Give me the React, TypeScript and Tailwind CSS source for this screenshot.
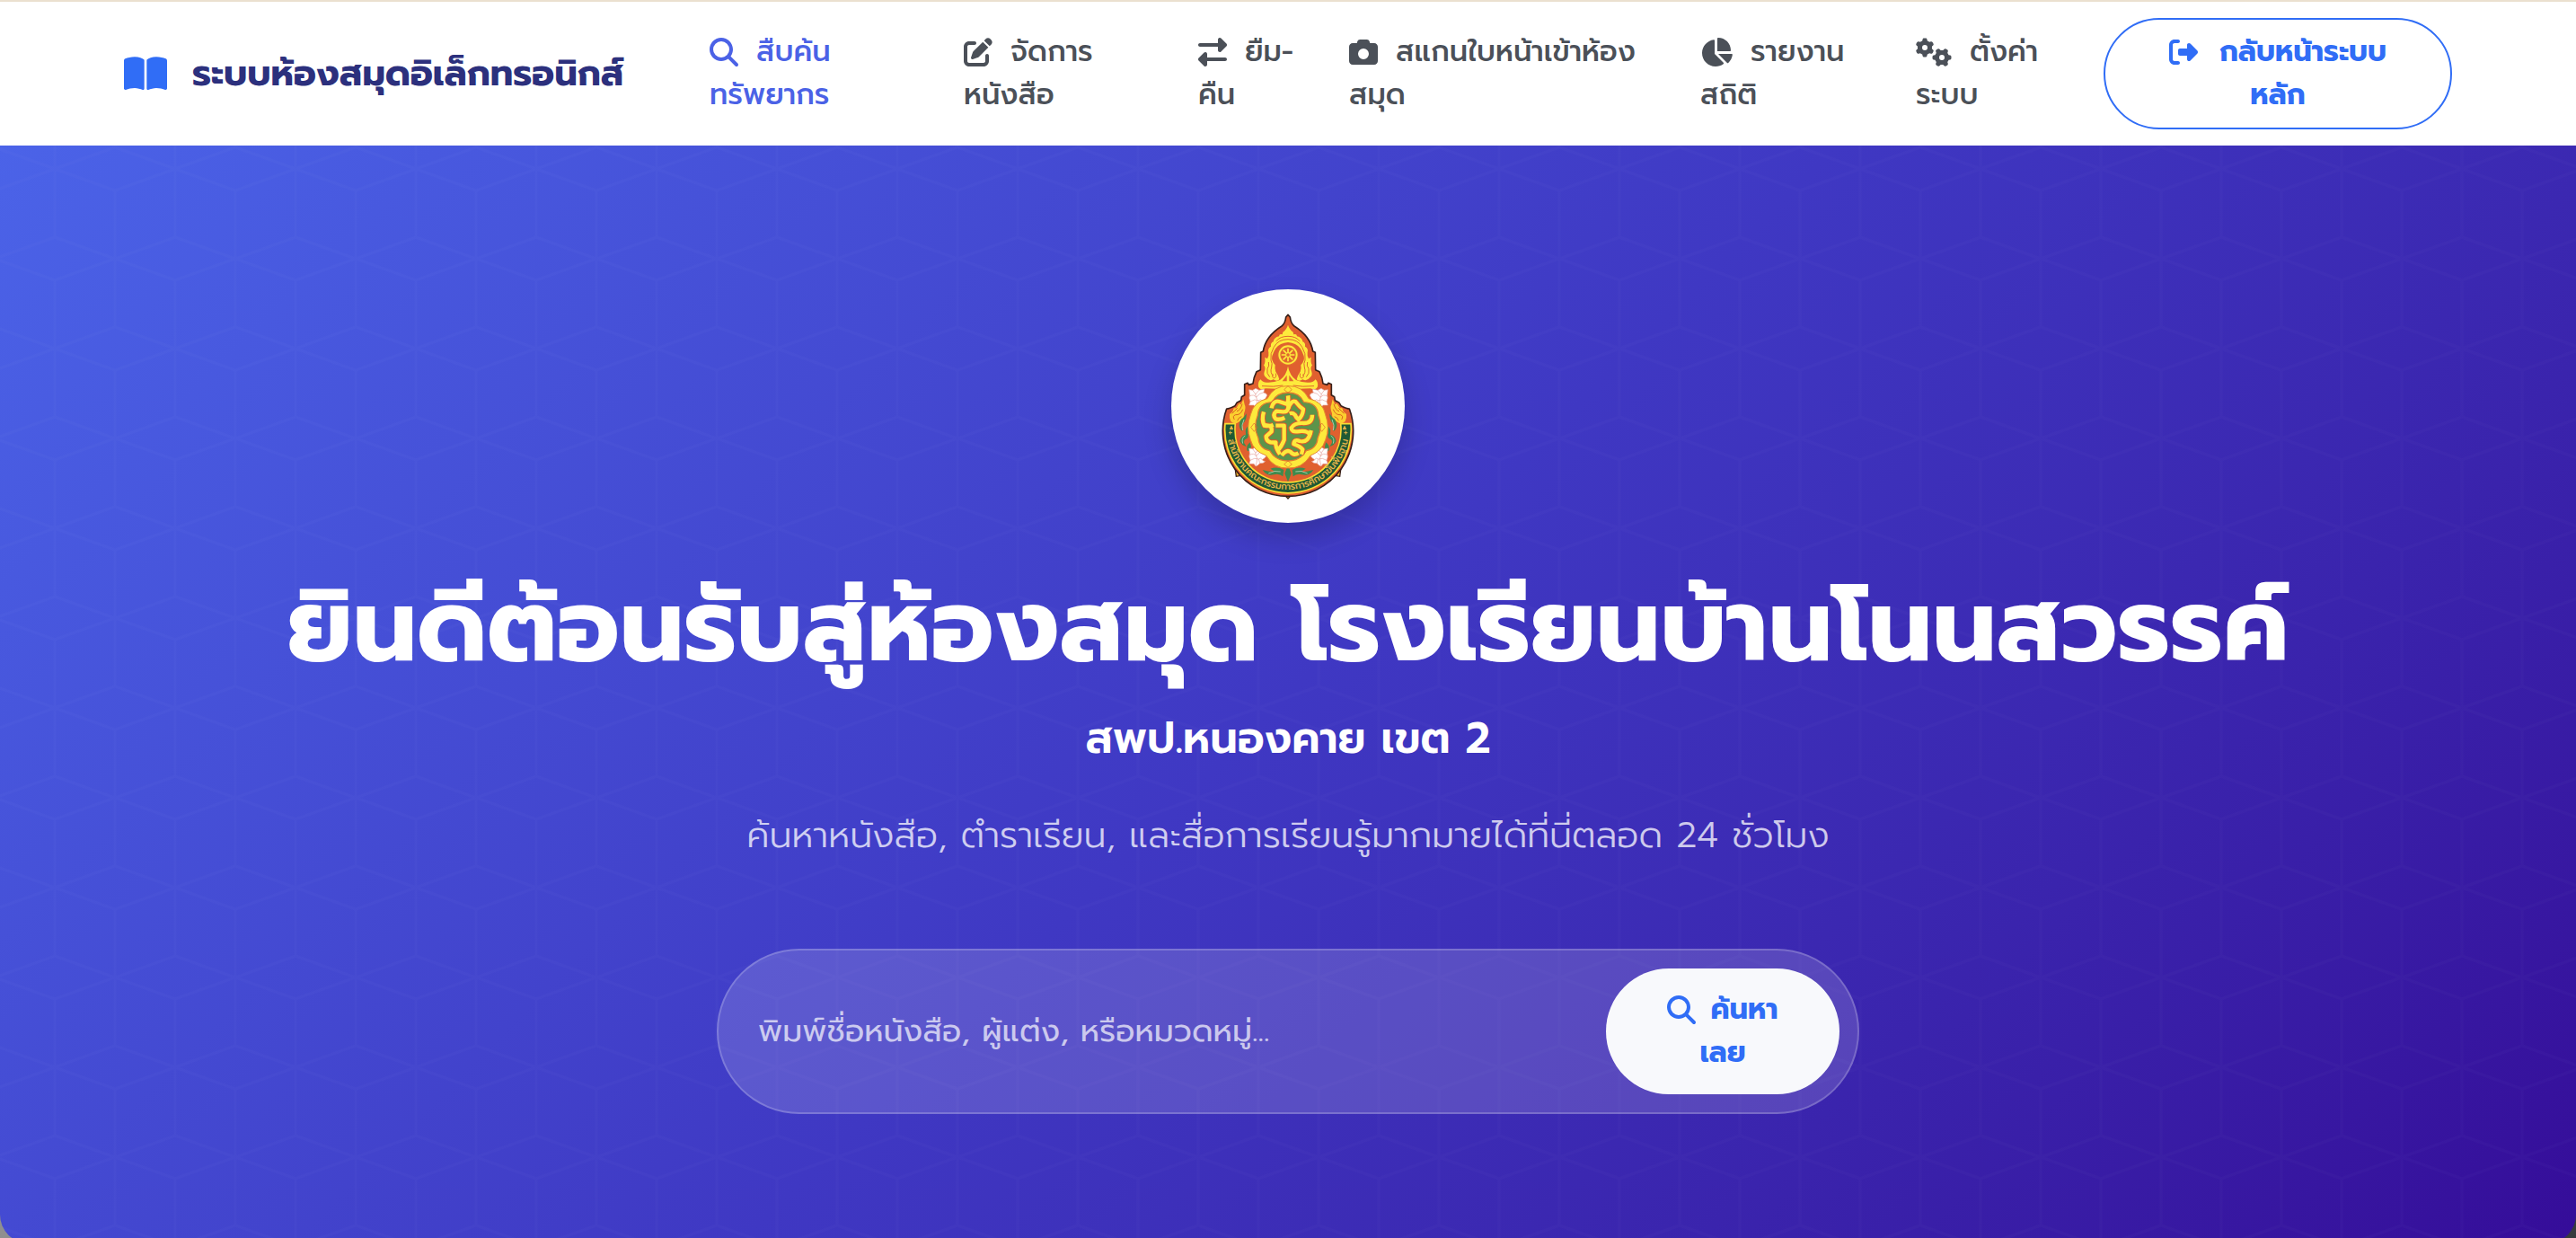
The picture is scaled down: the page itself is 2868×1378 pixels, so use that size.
import React from "react";
import type { IconType } from "react-icons";
import {
  FaBookOpen,
  FaCamera,
  FaChartPie,
  FaGears,
  FaMagnifyingGlass,
  FaPenToSquare,
  FaRightFromBracket,
  FaRightLeft,
} from "react-icons/fa6";

interface NavItem {
  icon: IconType;
  iconSize: string;
  first: string;
  second: string;
  active?: boolean;
}

const NAV_ITEMS: NavItem[] = [
  { icon: FaMagnifyingGlass, iconSize: "size-8", first: "สืบค้น", second: "ทรัพยากร", active: true },
  { icon: FaPenToSquare, iconSize: "size-8", first: "จัดการ", second: "หนังสือ" },
  { icon: FaRightLeft, iconSize: "size-8", first: "ยืม-", second: "คืน" },
  { icon: FaCamera, iconSize: "size-8", first: "สแกนใบหน้าเข้าห้อง", second: "สมุด" },
  { icon: FaChartPie, iconSize: "size-9", first: "รายงาน", second: "สถิติ" },
  { icon: FaGears, iconSize: "h-8 w-10", first: "ตั้งค่า", second: "ระบบ" },
];

const Navbar: React.FC = () => (
  <header className="border-t-2 border-[#ebe0cf] bg-white">
    <div className="mx-auto flex h-40 max-w-[2640px] items-center px-6">
      <a href="#home" className="flex w-[652px] shrink-0 items-center gap-7">
        <FaBookOpen className="size-12 text-[#306df6]" />
        <span className="text-[40px] font-bold whitespace-nowrap text-[#2c307d]">
          ระบบห้องสมุดอิเล็กทรอนิกส์
        </span>
      </a>
      <nav className="grid flex-1 grid-cols-[283fr_261fr_168fr_391fr_240fr_209fr]">
        {NAV_ITEMS.map(({ icon: Icon, iconSize, first, second, active }) => (
          <a
            key={second}
            href="#menu"
            className={`text-[32px] leading-[48px] font-medium whitespace-nowrap ${
              active ? "text-[#4b62e6]" : "text-[#4b5058]"
            }`}
          >
            <span className="flex items-center gap-5">
              <Icon className={iconSize} />
              {first}
            </span>
            {second}
          </a>
        ))}
      </nav>
      <button
        type="button"
        className="flex w-[388px] shrink-0 flex-col items-center rounded-full border-2 border-[#306df6] py-3 text-[32px] leading-[48px] font-bold whitespace-nowrap text-[#306df6]"
      >
        <span className="flex items-center gap-6">
          <FaRightFromBracket className="size-8" />
          กลับหน้าระบบ
        </span>
        หลัก
      </button>
    </div>
  </header>
);

/** Faint cube lattice laid over the hero gradient */
const CubePattern: React.FC = () => (
  <svg className="absolute inset-0 size-full" aria-hidden="true">
    <defs>
      <pattern
        id="cubes"
        width="134"
        height="200"
        patternUnits="userSpaceOnUse"
        patternTransform="translate(-6 26)"
      >
        <path
          d="M67 76L134 100L67 124L0 100ZM67 0V76M67 124V200M0 24V176M134 24V176M0 24L67 0L134 24M0 176L67 200L134 176"
          fill="none"
          stroke="#fff"
          strokeOpacity="0.016"
          strokeWidth="3"
        />
      </pattern>
    </defs>
    <rect width="100%" height="100%" fill="url(#cubes)" />
  </svg>
);

/** Right half of the crown's flame ornament, mirrored for the left */
const CrownHalf: React.FC = () => (
  <g>
    <path
      d="M435 184Q440 200 452 208L454 216Q464 212 465 222Q482 226 484 240Q494 244 492 256Q504 262 500 276Q498 288 504 297L512 292Q510 312 516 318Q508 328 514 340Q518 352 508 360Q498 374 484 366Q472 374 464 366Q468 350 476 340Q480 328 478 318Q492 304 488 288Q482 270 476 262Q462 244 435 242Z"
      fill="#fdea3c"
    />
    <g fill="none" stroke="#e0692f" strokeWidth="3">
      <path d="M435 232Q468 232 482 258Q496 280 492 302Q486 312 490 326Q496 344 484 354" />
      <path d="M435 222Q462 222 474 238M500 308Q496 322 504 330Q508 346 496 358" />
      <path d="M476 346Q472 360 482 362Q490 358 486 348" />
    </g>
    <path
      d="M435 322Q440 352 462 368Q480 376 500 376Q520 378 526 366Q536 372 534 390Q528 404 510 396Q470 398 435 396Z"
      fill="#fdea3c"
    />
    <path d="M439 352L454 372H439Z" fill="#e0692f" />
    <path d="M452 386Q482 392 522 388" fill="none" stroke="#e0692f" strokeWidth="3" />
  </g>
);

const SideHalf: React.FC = () => (
  <g>
    <path
      d="M584 432L592 450L598 446L608 462L616 462L620 474L630 482Q632 496 626 506Q612 518 600 508Q580 500 582 480Q574 460 580 450Z"
      fill="#fbcf2f"
    />
    <path
      d="M588 448Q594 470 606 472M586 466Q594 486 610 484Q622 488 614 500M590 490Q602 494 604 504M604 462Q612 470 622 480"
      fill="none"
      stroke="#d9641f"
      strokeWidth="3"
    />
    <g fill="#3f8a4d">
      <path d="M574 480Q572 500 584 512Q594 526 586 540Q598 534 598 518Q596 498 584 494Z" />
      <path d="M566 520Q580 528 576 550Q592 552 596 572Q588 588 574 590Q588 574 578 566Q562 560 570 544Z" />
      <path d="M562 576Q578 590 570 606Q560 604 558 590Z" />
      <path d="M449 668Q470 656 494 664L478 674Q496 676 520 668Q506 690 482 684Q466 678 452 690Z" />
    </g>
    <path
      d="M582 500Q592 520 586 536M578 554Q592 562 586 580M460 674Q480 668 500 680"
      fill="none"
      stroke="#a4c9a8"
      strokeWidth="3"
    />
  </g>
);

interface LotusProps {
  x: number;
  y: number;
  flip?: boolean;
}

const Lotus: React.FC<LotusProps> = ({ x, y, flip }) => (
  <g
    transform={`translate(${x} ${y}) scale(${flip ? -1 : 1} 1)`}
    fill="#fff"
    stroke="#e5a09a"
    strokeWidth="2"
  >
    <path d="M-30 -28L-18 -26L-8 -32L4 -26L20 -30Q22 -24 18 -18Q30 -16 30 -8Q26 4 14 10Q16 14 24 16Q16 24 6 22Q0 30 -8 32L-14 24L-30 24L-26 12Q-32 0 -28 -10Z" />
    <path
      d="M-28 -6Q-14 -14 -6 -2Q0 8 -8 30M-18 -26Q-8 -16 -6 -2Q4 -18 18 -18M4 -26Q-4 -20 -8 -12M-26 12Q-12 2 2 8Q10 2 14 10M2 8L6 22"
      fill="none"
    />
  </g>
);

const SchoolEmblem: React.FC = () => (
  <svg viewBox="45 65 780 780" className="size-full" role="img" aria-label="ตราสัญลักษณ์">
    <defs>
      <path id="ribbon" d="M231 530A204 204 0 1 0 639 530" />
    </defs>

    {/* tabs behind the ribbon */}
    <path
      d="M258 660L262 690L296 684M612 660L608 690L574 684M420 748L435 764L450 748"
      fill="#fbb82f"
      stroke="#38201a"
      strokeWidth="4"
    />

    {/* outer silhouette */}
    <path
      d="M435 150L442 158Q444 178 456 188Q510 222 518 272L526 276L527 334L540 340Q550 360 552 380L566 384L570 378L580 382V418L590 424L592 436L606 444L612 454Q632 464 640 464A218 218 0 1 1 230 464Q238 464 258 454L264 444L278 436L280 424L290 418V382L300 378L304 384L318 380Q320 360 330 340L343 334L344 276L352 272Q360 222 414 188Q426 178 428 158Z"
      fill="#e0602f"
      stroke="#38201a"
      strokeWidth="5"
      strokeLinejoin="round"
    />

    {/* green ribbon with the office name */}
    <path
      d="M225 514A211 211 0 1 0 645 514L611 514A177 177 0 1 1 259 514Z"
      fill="#1f5a35"
      stroke="#f9dc35"
      strokeWidth="5"
    />
    <text
      className="font-['Prompt','Noto_Sans',sans-serif] text-[31px] font-medium"
      fill="#e8b54a"
      textAnchor="middle"
    >
      <textPath href="#ribbon" startOffset="50%">
        สำนักงานคณะกรรมการการศึกษาขั้นพื้นฐาน
      </textPath>
    </text>
    <path
      d="M242 538V550M237 544H249M246 522L251 532H241ZM628 538V550M622 544H634M624 522L629 532H619Z"
      stroke="#e8b54a"
      strokeWidth="3"
      fill="#e8b54a"
    />

    <CrownHalf />
    <g transform="matrix(-1 0 0 1 870 0)">
      <CrownHalf />
    </g>
    <SideHalf />
    <g transform="matrix(-1 0 0 1 870 0)">
      <SideHalf />
    </g>
    <path d="M435 652L446 680L435 708L424 680Z" fill="#3f8a4d" />

    {/* wheel */}
    <circle cx="435" cy="284" r="36" fill="#e0692f" />
    <circle cx="435" cy="284" r="29" fill="none" stroke="#fdea3c" strokeWidth="6" />
    <path
      d="M435 262V306M413 284H457M419 268L451 300M451 268L419 300"
      stroke="#fdea3c"
      strokeWidth="5"
    />
    <circle cx="435" cy="284" r="7" fill="#e0692f" stroke="#fdea3c" strokeWidth="3" />

    <Lotus x={335} y={428} />
    <Lotus x={538} y={428} flip />
    <Lotus x={335} y={624} />
    <Lotus x={538} y={624} flip />

    {/* medallion */}
    <path
      d="M435 388Q482 386 504 430Q552 440 560 484Q576 526 560 568Q548 606 510 620Q482 664 435 662Q388 664 362 620Q320 606 310 568Q294 526 310 484Q320 440 366 430Q388 386 435 388Z"
      fill="#fdea3c"
      stroke="#e58a2f"
      strokeWidth="3"
    />
    <path
      d="M435 410Q474 410 488 442Q534 444 536 486Q552 526 534 562Q532 596 496 604Q476 638 435 638Q394 638 374 604Q338 596 336 562Q318 526 334 486Q336 444 382 442Q396 410 435 410Z"
      fill="#5d944a"
      stroke="#e07a2f"
      strokeWidth="4"
    />
    <path
      d="M435 388L448 400L435 411L422 400ZM435 638L448 649L435 660L422 649ZM322 512L333 526L322 540L311 526ZM548 512L559 526L548 540L537 526Z"
      fill="none"
      stroke="#e0602f"
      strokeWidth="2"
    />
    {[
      { color: "#dc5a2b", width: 19 },
      { color: "#fdea3c", width: 13 },
    ].map(({ color, width }) => (
      <g
        key={color}
        fill="none"
        stroke={color}
        strokeWidth={width}
        strokeLinejoin="round"
      >
        <path d="M380 462Q386 434 406 440L430 448Q438 440 435 420M436 440V462Q432 476 418 474L396 472Q382 484 394 498Q408 502 424 494" />
        <path d="M436 462Q446 434 460 440Q474 458 486 466Q484 488 470 500Q462 494 458 484Q450 476 440 480" />
        <path d="M354 474Q346 500 356 520Q384 516 380 540L362 556Q362 580 394 576Q392 592 408 616" />
        <path d="M356 520Q372 524 386 518M394 520H422V568Q414 590 398 606" />
        <path d="M516 484Q516 512 488 512Q456 510 446 528Q446 542 466 540Q500 534 510 552" />
        <path d="M512 536Q504 580 474 572Q456 564 454 582Q476 590 484 600L480 616" />
        <path d="M414 620Q430 598 444 608Q454 622 470 612" />
      </g>
    ))}
  </svg>
);

const SearchBar: React.FC = () => (
  <form
    role="search"
    onSubmit={(e) => e.preventDefault()}
    className="flex w-full max-w-[1272px] items-center rounded-full border-2 border-white/20 bg-white/15 p-5"
  >
    <input
      type="search"
      aria-label="ค้นหาหนังสือ"
      placeholder="พิมพ์ชื่อหนังสือ, ผู้แต่ง, หรือหมวดหมู่..."
      className="min-w-0 flex-1 bg-transparent px-6 text-[35px] text-white outline-none placeholder:text-white/70"
    />
    <button
      type="submit"
      className="flex w-[260px] shrink-0 flex-col items-center rounded-full bg-[#f8f9fc] py-[22px] text-[32px] leading-[48px] font-bold whitespace-nowrap text-[#306df6]"
    >
      <span className="flex items-center gap-4">
        <FaMagnifyingGlass className="size-8" />
        ค้นหา
      </span>
      เลย
    </button>
  </form>
);

const Hero: React.FC = () => (
  <section className="relative overflow-hidden rounded-b-[32px] bg-linear-135 from-[#4b63e8] via-[#3f38c3] to-[#350c99] text-white">
    <CubePattern />
    <div className="relative flex flex-col items-center px-6 pt-40 pb-36">
      <div className="size-[260px] overflow-hidden rounded-full bg-white shadow-[0_16px_32px_rgba(0,0,0,0.18)]">
        <SchoolEmblem />
      </div>
      <h1 className="mt-12 text-center text-[112px] leading-[136px] font-bold">
        ยินดีต้อนรับสู่ห้องสมุด โรงเรียนบ้านโนนสวรรค์
      </h1>
      <h2 className="mt-6 text-center text-[48px] leading-[64px] font-semibold">
        สพป.หนองคาย เขต 2
      </h2>
      <p className="mt-10 text-center text-[40px] leading-[72px] font-light text-white/75">
        ค้นหาหนังสือ, ตำราเรียน, และสื่อการเรียนรู้มากมายได้ที่นี่ตลอด 24 ชั่วโมง
      </p>
      <div className="mt-[90px] flex w-full justify-center">
        <SearchBar />
      </div>
    </div>
  </section>
);

const App: React.FC = () => (
  <div className="h-screen overflow-hidden bg-linear-to-r from-[#8f8f8f] to-[#363a3c] font-['Prompt','Noto_Sans_Thai','Noto_Sans',sans-serif]">
    <Navbar />
    <Hero />
  </div>
);

export default App;
